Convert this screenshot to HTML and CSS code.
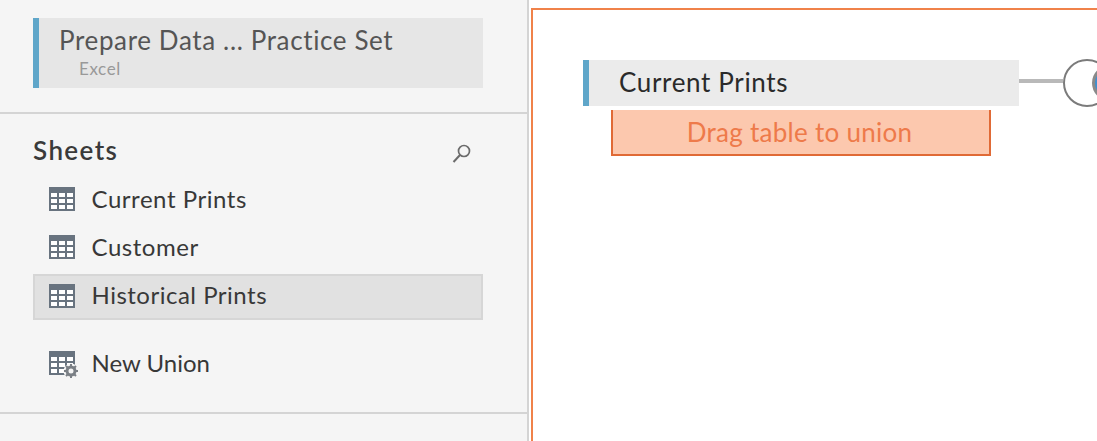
FILE: index.html
```html
<!DOCTYPE html>
<html lang="en">
<head>
  <meta charset="UTF-8">
  <title>Prepare Data</title>
  <link rel="stylesheet" href="styles.css">
</head>
<body>
<div class="wrapper">
  <!-- SIDEBAR -->
  <div class="sidebar">
    <div class="conn-section">
      <div class="conn">
        <div class="conn-name">Prepare Data ... Practice Set</div>
        <div class="conn-type">Excel</div>
      </div>
    </div>
    <div class="sheets">
      <div class="sheets-head">
        <h2>Sheets</h2>
        <svg class="search-icon" width="20" height="20" viewBox="0 0 20 20"><circle cx="12" cy="8" r="5.5" fill="none" stroke="#6b6b6b" stroke-width="1.7"/><path d="M8 12 1.5 19" stroke="#6b6b6b" stroke-width="2" fill="none"/></svg>
      </div>
      <div class="sheet-row">
        <svg class="table-icon" width="26" height="24" viewBox="0 0 26 24"><use href="#tbl"/></svg>
        <span>Current Prints</span>
      </div>
      <div class="sheet-row">
        <svg class="table-icon" width="26" height="24" viewBox="0 0 26 24"><use href="#tbl"/></svg>
        <span>Customer</span>
      </div>
      <div class="sheet-row selected">
        <svg class="table-icon" width="26" height="24" viewBox="0 0 26 24"><use href="#tbl"/></svg>
        <span>Historical Prints</span>
      </div>
      <div class="sheet-row union">
        <svg class="table-icon" width="32" height="28" viewBox="0 0 32 28">
          <use href="#tbl"/>
          <circle cx="22" cy="20" r="7.5" fill="#f5f5f5"/>
          <circle cx="22" cy="20" r="4" fill="none" stroke="#7a7f85" stroke-width="3"/>
          <path d="M22 13v3M22 24v3M15 20h3M26 20h3M17 15l2 2M25 23l2 2M27 15l-2 2M19 23l-2 2" stroke="#7a7f85" stroke-width="2"/>
        </svg>
        <span>New Union</span>
      </div>
    </div>
  </div>

  <!-- CANVAS -->
  <div class="canvas">
    <div class="node-row">
      <div class="table-node">Current Prints</div>
      <div class="link"></div>
      <div class="union-circle"><div class="union-inner"></div></div>
    </div>
    <div class="drop-zone">Drag table to union</div>
  </div>
</div>

<svg class="defs" width="0" height="0">
  <defs>
    <g id="tbl">
      <rect x="0" y="0" width="26" height="24" fill="#68737f"/>
      <path d="M2 6h6v4H2zM10 6h6v4h-6zM18 6h6v4h-6zM2 12h6v4H2zM10 12h6v4h-6zM18 12h6v4h-6zM2 18h6v4H2zM10 18h6v4h-6zM18 18h6v4h-6z" fill="#fff"/>
    </g>
  </defs>
</svg>
</body>
</html>
```

FILE: styles.css
```css
:root{
  --panel:#f5f5f5;
  --line:#d4d4d4;
  --blue:#5fa6c9;
  --orange:#f0824a;
}
*{box-sizing:border-box;margin:0;padding:0}
html,body{height:441px;overflow:hidden;background:#fff}
body{font-family:'Lato','Open Sans',sans-serif;color:#2b2b2b}
.wrapper{display:flex;height:100%}
.defs{display:block}

/* sidebar */
.sidebar{width:529px;flex:none;background:var(--panel);border-right:2px solid var(--line)}
.conn-section{padding:18px 44px 24px 33px;border-bottom:2px solid var(--line)}
.conn{height:70px;background:#e6e6e6;border-left:6px solid var(--blue);padding:6px 0 0 20px}
.conn-name{font-size:26px;line-height:32px;letter-spacing:.63px;color:#555}
.conn-type{font-size:17px;line-height:20px;letter-spacing:.6px;color:#999;margin:3px 0 0 20px}
.sheets{padding:0 44px 0 33px;height:300px;border-bottom:2px solid var(--line)}
.sheets-head{display:flex;align-items:center;justify-content:space-between;height:61px;padding:11px 0 0}
.sheets-head h2{font-size:26px;font-weight:600;letter-spacing:1.4px;color:#3a3a3a}
.search-icon{margin:5px 11px 0 0}
.sheet-row{display:flex;align-items:center;height:48px;padding-left:16px;font-size:24px;letter-spacing:.55px;color:#383838}
.sheet-row span{margin:-1px 0 0 16.5px}
.sheet-row.selected{height:46px;margin-top:3px;background:#e1e1e1;border:2px solid #d6d6d6;padding-left:14px;letter-spacing:.5px}
.sheet-row.selected span{margin-top:-5px}
.sheet-row.selected .table-icon{margin-top:-2px}
.sheet-row.union{margin-top:19px}
.sheet-row.union .table-icon{margin-top:4px}
.sheet-row.union span{margin-left:10.5px;letter-spacing:0}

/* canvas */
.canvas{flex:1;margin:8px 0 0 2px;border:solid var(--orange);border-width:2px 0 0 2px;padding:50px 0 0 50px;min-width:0}
.node-row{display:flex;align-items:center;height:46px}
.table-node{width:436px;height:46px;flex:none;background:#ebebeb;border-left:6px solid var(--blue);padding-left:30px;font-size:26px;line-height:44px;letter-spacing:.65px;color:#2a2a2a}
.link{width:44px;height:4px;flex:none;background:#b9b9b9;margin-top:-4px}
.union-circle{width:48px;height:48px;flex:none;border:2px solid #7b7b7b;border-radius:50%;background:#fff;padding:4px 0 0 27px}
.union-inner{width:36px;height:36px;border-radius:50%;background:#3f8fd0;border:3px solid #8a8a8a}
.drop-zone{width:380px;height:46px;margin:4px 0 0 28px;padding-right:3px;background:#fcc8ae;border:2px solid #e06a36;border-top:0;text-align:center;font-size:26px;line-height:44px;letter-spacing:.27px;color:#ee7a4a}
```
